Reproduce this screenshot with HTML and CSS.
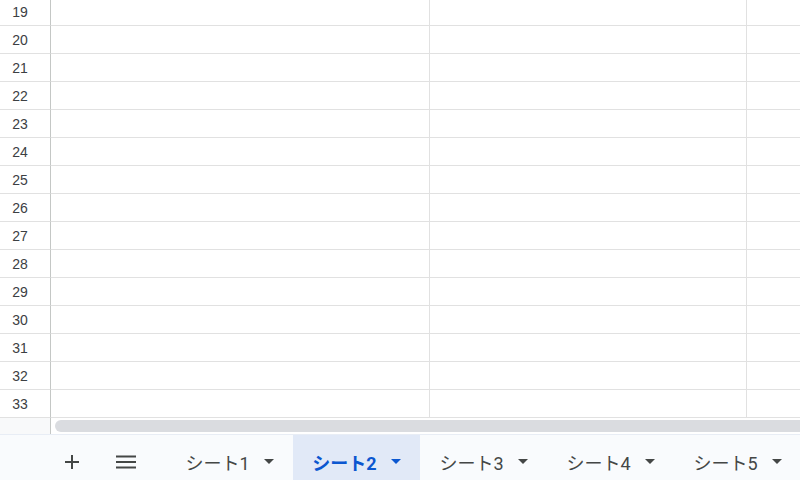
FILE: index.html
```html
<!DOCTYPE html>
<html lang="ja">
<head>
<meta charset="utf-8">
<link rel="stylesheet" href="styles.css">
</head>
<body>
<div class="sheet">
  <div class="grid">
    <div class="row"><div class="rh">19</div><div class="c"></div><div class="c"></div><div class="c"></div></div>
    <div class="row"><div class="rh">20</div><div class="c"></div><div class="c"></div><div class="c"></div></div>
    <div class="row"><div class="rh">21</div><div class="c"></div><div class="c"></div><div class="c"></div></div>
    <div class="row"><div class="rh">22</div><div class="c"></div><div class="c"></div><div class="c"></div></div>
    <div class="row"><div class="rh">23</div><div class="c"></div><div class="c"></div><div class="c"></div></div>
    <div class="row"><div class="rh">24</div><div class="c"></div><div class="c"></div><div class="c"></div></div>
    <div class="row"><div class="rh">25</div><div class="c"></div><div class="c"></div><div class="c"></div></div>
    <div class="row"><div class="rh">26</div><div class="c"></div><div class="c"></div><div class="c"></div></div>
    <div class="row"><div class="rh">27</div><div class="c"></div><div class="c"></div><div class="c"></div></div>
    <div class="row"><div class="rh">28</div><div class="c"></div><div class="c"></div><div class="c"></div></div>
    <div class="row"><div class="rh">29</div><div class="c"></div><div class="c"></div><div class="c"></div></div>
    <div class="row"><div class="rh">30</div><div class="c"></div><div class="c"></div><div class="c"></div></div>
    <div class="row"><div class="rh">31</div><div class="c"></div><div class="c"></div><div class="c"></div></div>
    <div class="row"><div class="rh">32</div><div class="c"></div><div class="c"></div><div class="c"></div></div>
    <div class="row"><div class="rh">33</div><div class="c"></div><div class="c"></div><div class="c"></div></div>
  </div>
  <div class="hscroll">
    <div class="corner"></div>
    <div class="track"><div class="thumb"></div></div>
  </div>
  <div class="tabbar">
    <button class="icon-btn plus" aria-label="シートを追加">
      <svg width="14" height="14" viewBox="0 0 14 14"><path d="M7 0v14M0 7h14" stroke="#444746" stroke-width="2" fill="none"/></svg>
    </button>
    <button class="icon-btn menu" aria-label="すべてのシート">
      <svg width="20" height="14" viewBox="0 0 20 14"><path d="M0 1.5h20M0 7h20M0 12.5h20" stroke="#444746" stroke-width="2" fill="none"/></svg>
    </button>
    <div class="tabs">
      <div class="tab"><span class="label">シート1</span><svg class="arrow" width="10" height="5" viewBox="0 0 10 5"><path d="M0 0h10L5 5z"/></svg></div>
      <div class="tab active"><span class="label">シート2</span><svg class="arrow" width="10" height="5" viewBox="0 0 10 5"><path d="M0 0h10L5 5z"/></svg></div>
      <div class="tab"><span class="label">シート3</span><svg class="arrow" width="10" height="5" viewBox="0 0 10 5"><path d="M0 0h10L5 5z"/></svg></div>
      <div class="tab"><span class="label">シート4</span><svg class="arrow" width="10" height="5" viewBox="0 0 10 5"><path d="M0 0h10L5 5z"/></svg></div>
      <div class="tab"><span class="label">シート5</span><svg class="arrow" width="10" height="5" viewBox="0 0 10 5"><path d="M0 0h10L5 5z"/></svg></div>
    </div>
  </div>
</div>
</body>
</html>
```
FILE: styles.css
```css
* { box-sizing: border-box; }
html, body {
  margin: 0;
  padding: 0;
  width: 800px;
  height: 480px;
  overflow: hidden;
  background: #fff;
  font-family: Arial, "Liberation Sans", "Noto Sans CJK JP", sans-serif;
}
.sheet {
  width: 800px;
  height: 480px;
  display: flex;
  flex-direction: column;
  overflow: hidden;
}
.grid {
  margin-top: -2px;
  flex: none;
}
.row {
  display: grid;
  grid-template-columns: 51px 379px 317px 1fr;
  height: 28px;
}
.rh, .c {
  border-bottom: 1px solid #e1e1e1;
  border-right: 1px solid #e1e1e1;
}
.rh {
  border-right-color: #c4c7c5;
  display: flex;
  align-items: center;
  justify-content: center;
  padding-right: 10px;
  font-size: 14px;
  color: #3c4043;
}
.c:last-child { border-right: none; }
.hscroll {
  flex: none;
  height: 17px;
  display: flex;
  border-bottom: 1px solid #e8edf5;
}
.corner {
  flex: none;
  width: 51px;
  background: #f8f9fa;
  border-right: 1px solid #c4c7c5;
}
.track {
  flex: 1;
  min-width: 0;
  overflow: hidden;
  padding: 2px 0 0 4px;
  background: #fff;
}
.thumb {
  height: 12px;
  width: 760px;
  background: #dadce0;
  border-radius: 6px;
}
.tabbar {
  flex: 1;
  display: flex;
  align-items: stretch;
  background: #f9fbfd;
}
.icon-btn {
  border: none;
  background: none;
  padding: 8px 0 0 0;
  margin: 0;
  display: flex;
  align-items: center;
  justify-content: center;
}
.plus { margin-left: 65px; width: 14px; }
.menu { margin-left: 37px; width: 20px; }
.tabs {
  display: flex;
  margin-left: 30px;
}
.tab {
  width: 127px;
  flex: none;
  display: flex;
  align-items: center;
  justify-content: center;
  gap: 14px;
  padding-top: 8px;
  font-family: Roboto, "Noto Sans CJK JP", sans-serif;
  font-size: 18px;
  color: #444746;
  white-space: nowrap;
}
.tab .arrow { fill: #444746; flex: none; }
.tab.active {
  background: #e1e9f7;
  color: #0b57d0;
  font-weight: 700;
}
.tab.active .arrow { fill: #0b57d0; }
```
